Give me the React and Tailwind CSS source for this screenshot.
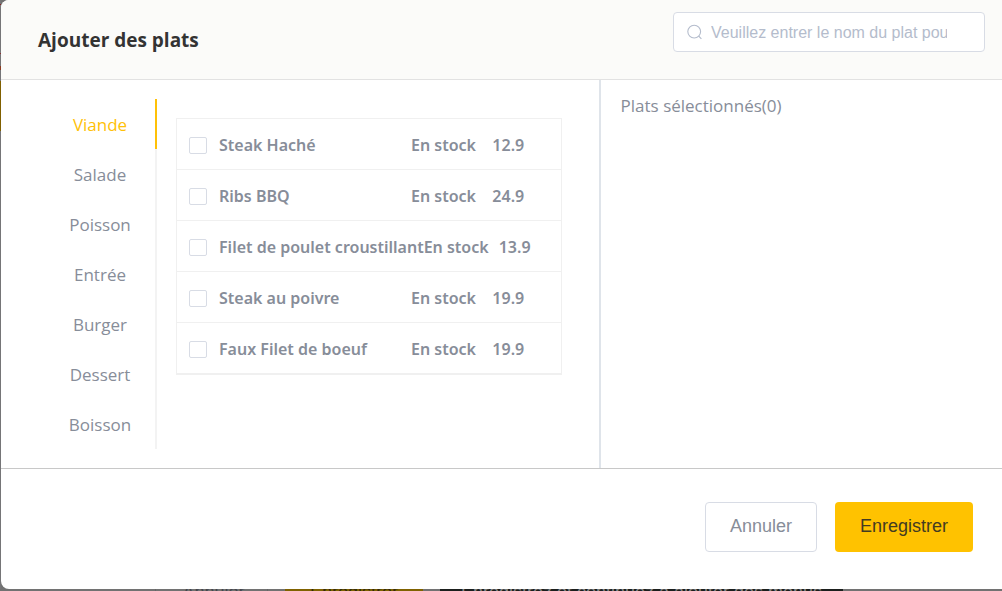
import { useState } from "react";

const categories = ["Viande", "Salade", "Poisson", "Entrée", "Burger", "Dessert", "Boisson"];

const dishes = [
  { name: "Steak Haché", price: "12.9" },
  { name: "Ribs BBQ", price: "24.9" },
  { name: "Filet de poulet croustillant", price: "13.9" },
  { name: "Steak au poivre", price: "19.9" },
  { name: "Faux Filet de boeuf", price: "19.9" },
];

function SearchIcon() {
  return (
    <svg
      viewBox="0 0 16 16"
      className="pointer-events-none absolute left-3.5 top-3 size-4 text-[#b4bccc]"
      fill="none"
      stroke="currentColor"
      strokeWidth="1.1"
      aria-hidden="true"
    >
      <circle cx="7.2" cy="7.6" r="6.4" />
      <path d="M11.6 12 14.4 14.8" />
    </svg>
  );
}

/* Edge of the dimmed page left of the dialog */
function PageEdge() {
  return (
    <div className="flex w-px shrink-0 flex-col bg-[#757577]" aria-hidden="true">
      <div className="mt-1 h-px bg-[#8a2020]" />
      <div className="mt-12 h-px bg-[#8a3030]" />
      <div className="mt-3 h-1 bg-[#8a3a20]" />
      <div className="mt-[11px] h-[50px] bg-[#806000]" />
    </div>
  );
}

/* Dimmed actions of the page under the dialog */
function PageActions() {
  return (
    <div
      className="flex h-0.5 shrink-0 overflow-hidden bg-[#727272] font-['Liberation_Sans',sans-serif] text-lg leading-[7px]"
      aria-hidden="true"
    >
      <div className="ml-[155px] w-[113px] shrink-0 border-x border-[#666] pl-1 text-center text-[#44464c]">Annuler</div>
      <div className="ml-[17px] w-[138px] shrink-0 bg-[#806200] text-center text-[#332a08]">Enregistrer</div>
      <div className="ml-[17px] w-[403px] shrink-0 bg-[#1b1f1d] text-center text-[#858585]">
        Enregistrez et continuez à ajouter des menus
      </div>
    </div>
  );
}

export default function App() {
  const [active, setActive] = useState("Viande");
  const [selected, setSelected] = useState([]);

  const toggle = (name) =>
    setSelected((list) => (list.includes(name) ? list.filter((n) => n !== name) : [...list, name]));

  return (
    <div className="flex h-screen flex-col bg-[#727272] font-['Open_Sans',sans-serif] text-[17px] text-[#878d99]">
      <div className="flex min-h-0 flex-1">
        <PageEdge />
        <section
          role="dialog"
          aria-labelledby="dialog-title"
          className="flex min-w-0 flex-1 flex-col overflow-hidden rounded-l-lg bg-white"
        >
          <header className="flex h-20 shrink-0 items-start justify-between border-b border-[#e2e2e2] bg-[#fbfbf9] pl-[37px] pr-[17px] pt-3">
            <h1 id="dialog-title" className="py-4 text-[19px] font-bold leading-6 text-[#333]">
              Ajouter des plats
            </h1>
            <div className="relative w-[312px]">
              <input
                type="text"
                aria-label="Nom du plat"
                placeholder="Veuillez entrer le nom du plat pour rechercher"
                className="block h-10 w-full rounded border border-[#d8dce5] bg-white pl-[37px] pr-[37px] pt-0.5 font-['Liberation_Sans',sans-serif] text-base text-[#5a5e66] outline-none placeholder:text-[#b4bccc]"
              />
              <SearchIcon />
            </div>
          </header>

          <div className="flex min-h-0 flex-1">
            <div className="flex w-[calc(60%-1px)] items-start border-r-2 border-[#dfe4ea] pl-11 pr-[37px] pt-[19px]">
              <ul className="w-28 shrink-0">
                {categories.map((c) => (
                  <li key={c}>
                    <button
                      type="button"
                      onClick={() => setActive(c)}
                      className={
                        active === c
                          ? "block h-[50px] w-full border-r-2 border-[#ffc107] pt-0.5 text-center text-[#ffc107]"
                          : "block h-[50px] w-full border-r-2 border-[#f3f3f3] pt-0.5 text-center"
                      }
                    >
                      {c}
                    </button>
                  </li>
                ))}
              </ul>

              <table className="ml-[19px] mt-[19px] block min-w-0 flex-1 border border-[#f0f0f0] font-['Noto_Sans','Open_Sans',sans-serif] text-base font-semibold">
                <tbody className="block">
                  {dishes.map((d, i) => (
                    <tr key={d.name} className="flex h-[51px] items-center border-b border-[#f0f0f0] pl-3 pr-5 pt-0.5">
                      <td className="mr-3 flex">
                        <input
                          id={`dish-${i}`}
                          type="checkbox"
                          checked={selected.includes(d.name)}
                          onChange={() => toggle(d.name)}
                          className="h-[17px] w-[18px] appearance-none rounded-xs border border-[#d8dce5] bg-white checked:border-[#ffc107] checked:bg-[#ffc107]"
                        />
                      </td>
                      <td className="min-w-48 whitespace-nowrap">
                        <label htmlFor={`dish-${i}`}>{d.name}</label>
                      </td>
                      <td className="whitespace-nowrap">En stock</td>
                      <td className="flex-1 text-center">{d.price}</td>
                    </tr>
                  ))}
                </tbody>
              </table>
            </div>

            <aside className="flex-1 pl-5 pt-[14px]">
              <h2 className="leading-6">Plats sélectionnés({selected.length})</h2>
            </aside>
          </div>

          <footer className="flex h-[121px] shrink-0 items-start justify-end gap-[18px] border-t border-[#c8c8c8] pr-[29px] pt-[33px] font-['Liberation_Sans',sans-serif] text-lg">
            <button type="button" className="h-[50px] w-28 rounded border border-[#d8dce5] bg-white pb-0.5">
              Annuler
            </button>
            <button type="button" className="h-[50px] w-[138px] rounded bg-[#ffc200] pb-0.5 text-[#433b22]">
              Enregistrer
            </button>
          </footer>
        </section>
      </div>
      <PageActions />
    </div>
  );
}
